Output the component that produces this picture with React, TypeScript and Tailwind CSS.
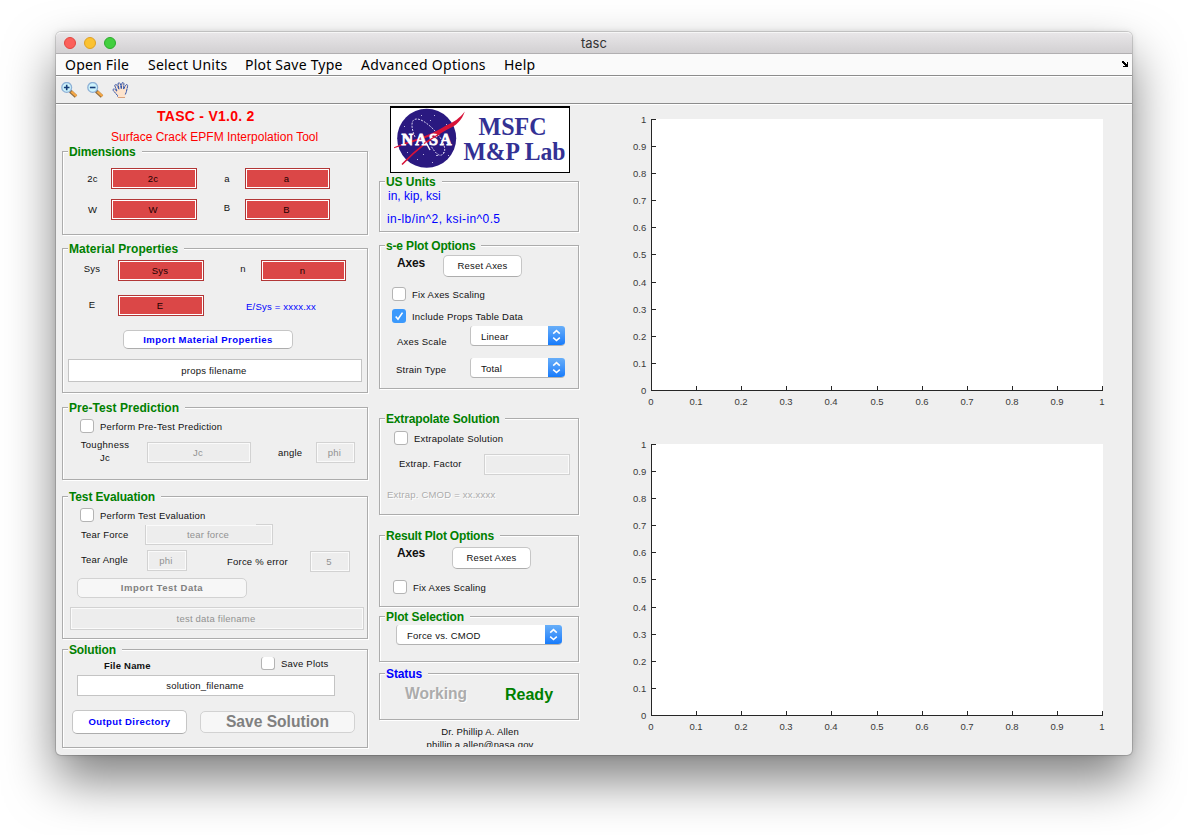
import React from "react";

type Box = { className?: string; children?: React.ReactNode };

function Label({ className = "", children }: Box) {
  return <div className={`shrink-0 whitespace-nowrap pt-px text-[9.5px] leading-[12px] tracking-[0.21px] ${className}`}>{children}</div>;
}

function Panel({ title, className = "", titleClass = "text-[#008000]", children }: Box & { title: string; titleClass?: string }) {
  return (
    <section className={`flex shrink-0 flex-col border border-[#acacac] shadow-[1px_1px_0_#fff,inset_1px_1px_0_#fff] ${className}`}>
      <h2 className={`-mt-[7px] ml-[5px] w-fit whitespace-nowrap bg-[#efefef] pr-1.5 pl-px text-[12px] leading-[14px] font-bold ${titleClass}`}>
        {title}
      </h2>
      {children}
    </section>
  );
}

function Row({ className = "", children }: Box) {
  return <div className={`flex shrink-0 items-start ${className}`}>{children}</div>;
}

function RedField({ className = "", children }: Box) {
  return (
    <div className={`flex h-[21px] shrink-0 justify-center border border-[#b23636] bg-[#db4747] pt-[4px] pr-[2px] text-[9.5px] leading-[12px] tracking-[0.21px] text-[#200] shadow-[inset_0_0_0_1px_#fff] ${className}`}>
      {children}
    </div>
  );
}

function WhiteField({ className = "", children }: Box) {
  return (
    <div className={`flex shrink-0 items-center justify-center border border-[#c4c4c4] bg-white pt-px pr-[2px] text-[9.5px] leading-[12px] tracking-[0.21px] ${className}`}>
      {children}
    </div>
  );
}

function GrayField({ className = "", children }: Box) {
  return (
    <div className={`flex shrink-0 items-center justify-center border border-[#d2d2d2] bg-[#ededed] pt-px pr-[2px] text-[9.5px] leading-[12px] tracking-[0.21px] text-[#929292] shadow-[inset_0_0_0_1px_#fafafa] ${className}`}>
      {children}
    </div>
  );
}

function Button({ className = "", children }: Box) {
  return (
    <div className={`flex shrink-0 items-center justify-center whitespace-nowrap rounded-[5px] border border-[#c6c6c6] border-b-[#adadad] bg-white leading-[12px] ${className}`}>
      {children}
    </div>
  );
}

function DisabledButton({ className = "", children }: Box) {
  return (
    <div className={`flex shrink-0 items-center justify-center whitespace-nowrap rounded-[5px] border border-[#d2d2d2] bg-[#f7f7f7] font-bold text-[#808080] ${className}`}>
      {children}
    </div>
  );
}

function Check({ className = "", checked = false }: { className?: string; checked?: boolean }) {
  return checked ? (
    <svg className={`size-[14px] shrink-0 ${className}`} viewBox="0 0 14 14">
      <rect width="14" height="14" rx="3" fill="#3b99fc" />
      <path d="M3.7 7.4 6 10.2 10.5 3.6" fill="none" stroke="#fff" strokeWidth="1.6" />
    </svg>
  ) : (
    <div className={`size-[14px] shrink-0 rounded-[3px] border border-[#b4b4b4] bg-white ${className}`} />
  );
}

function Select({ className = "", children }: Box) {
  return (
    <div className={`flex h-[20px] shrink-0 overflow-hidden rounded-[4px] rounded-t-[3px] border border-t-0 border-r-0 border-[#c2c2c2] border-b-[#b2b2b2] bg-white ${className}`}>
      <div className="grow pt-[5px] pl-[10px] text-[9.5px] leading-[12px] tracking-[0.21px]">{children}</div>
      <div className="-mb-px flex w-[17px] items-center justify-center bg-linear-to-b from-[#67aef8] to-[#0a78fb]">
        <svg className="h-[14px] w-[11px]" viewBox="0 0 11 14" fill="none" stroke="#fff" strokeWidth="1.5">
          <path d="M2.2 4.6 5.5 1.6 8.8 4.6M2.2 8.6 5.5 11.6 8.8 8.6" />
        </svg>
      </div>
    </div>
  );
}

const steps = [0, 1, 2, 3, 4, 5, 6, 7, 8, 9, 10];
const tickText = (i: number) => (i === 0 ? "0" : i === 10 ? "1" : `0.${i}`);

function Plot() {
  return (
    <svg className="block h-[300px] w-[490px] shrink-0" viewBox="0 0 490 300" fontSize="9.5" fill="#3a3a3a">
      <rect x="25" y="9" width="452" height="272" fill="#fff" />
      <path d="M25.5 9V280.5H477" fill="none" stroke="#262626" shapeRendering="crispEdges" />
      {steps.map((i) => {
        const x = 25.5 + Math.round(i * 45.12);
        const y = 280.5 - Math.round(i * 27.1);
        return (
          <g key={i}>
            <path d={`M${x} 276V281M25 ${y}H29.5`} stroke="#262626" shapeRendering="crispEdges" />
            <text x={x - 0.5} y="295" textAnchor="middle">{tickText(i)}</text>
            <text x="20.3" y={y + 3.5} textAnchor="end">{tickText(i)}</text>
          </g>
        );
      })}
    </svg>
  );
}

function Logo() {
  return (
    <svg className="mt-px ml-[11px] block h-[67px] w-[180px] shrink-0" viewBox="0 0 180 67">
      <rect width="180" height="67" fill="#000" />
      <rect x="1" y="2" width="178" height="64" fill="#fff" />
      <circle cx="36.7" cy="32.3" r="29.5" fill="#2a1980" />
      <g fill="none" stroke="#d5d0ee" strokeWidth="1" strokeDasharray="2 1.2">
        <path d="M25 31C19 17 22 9 33 15C45 22 58 39 54 47C50 52 46 48 41 40" />
      </g>
      <g fill="#bdb6e0">
        <rect x="14" y="20" width="1" height="1" /><rect x="44" y="9" width="1" height="1" />
        <rect x="56" y="18" width="1" height="1" /><rect x="33" y="48" width="1" height="1" />
        <rect x="27" y="53" width="1" height="1" /><rect x="42" y="56" width="1" height="1" />
        <rect x="53" y="46" width="1" height="1" /><rect x="17" y="46" width="1" height="1" />
        <rect x="46" y="49" width="2" height="1" /><rect x="31" y="9" width="1" height="1" />
        <rect x="58" y="49" width="1" height="1" /><rect x="40" y="14" width="1" height="1" />
      </g>
      <path d="M4 41.3C12 37.5 20 35.5 28 32.5C38 29 48 25 56 19.5C64 16 70 12 74.8 5.5C72 14 66 20 58 23C50 27 44 30 38 31C28 35 14 38.5 4 42.3Z" fill="#d81339" />
      <path d="M12 58.5C24 46 38 33 62 19.5" fill="none" stroke="#d81339" strokeWidth="1.5" />
      <g fontFamily="Liberation Serif, serif" fontWeight="bold" fontSize="16" fill="#fff" stroke="#fff" strokeWidth=".8">
        <text x="11.5" y="38.8" textLength="50" lengthAdjust="spacing">NASA</text>
      </g>
      <path d="M34 37.5 50 27.5" stroke="#d81339" strokeWidth="1.3" />
      <path d="M36 36.5 40 44" stroke="#fff" strokeWidth="1.4" />
      <g fontFamily="Liberation Serif, serif" fontWeight="bold" fill="#333194">
        <text x="88.5" y="29.3" textLength="68" lengthAdjust="spacingAndGlyphs" fontSize="25">MSFC</text>
        <text x="73.5" y="54.3" textLength="102" lengthAdjust="spacingAndGlyphs" fontSize="25">M&amp;P Lab</text>
      </g>
    </svg>
  );
}

function Magnifier({ plus = false, className = "" }: { plus?: boolean; className?: string }) {
  return (
    <svg className={`size-[17px] shrink-0 ${className}`} viewBox="0 0 17 17">
      <path d="M9.2 9.2 15 14.5" stroke="#8a6a40" strokeWidth="3.6" />
      <path d="M10.4 9.6 15.4 14.2" stroke="#f2a646" strokeWidth="2.4" />
      <circle cx="5.7" cy="5.4" r="4.9" fill="#cdf3fc" stroke="#8db0d6" strokeWidth="1.3" />
      <path d={plus ? "M2.9 5.5H8.5M5.7 2.7V8.3" : "M2.9 5.5H8.5"} stroke="#153c78" strokeWidth="1.6" />
    </svg>
  );
}

function Hand() {
  return (
    <svg className="ml-[8px] h-[17px] w-[18px] shrink-0" viewBox="0 0 18 17">
      <path d="M5.5 16V13.5L1.3 8.6C.4 7.2 2 6.4 3 7.4L5 9.3 2.9 4C2.4 2.4 4.3 1.9 5 3.3L7 7.2 6 2C5.9.5 7.9.3 8.3 1.8L9.3 6.8 9.8 1.8C10-.1 12 .2 11.9 1.8L11.6 7.2 13.6 3.3C14.4 1.9 16.2 2.7 15.6 4.3L14.3 10 13.3 13V16Z" fill="#fde3cc" />
      <path d="M5.5 14.5V13.5L1.3 8.6C.4 7.2 2 6.4 3 7.4L5 9.3 2.9 4C2.4 2.4 4.3 1.9 5 3.3L7 7.2 6 2C5.9.5 7.9.3 8.3 1.8L9.3 6.8 9.8 1.8C10-.1 12 .2 11.9 1.8L11.6 7.2 13.6 3.3C14.4 1.9 16.2 2.7 15.6 4.3L14.3 10 13.3 12.5" fill="none" stroke="#2f52a8" strokeDasharray="3 .4" />
      <path d="M6 15.5H13" stroke="#d9a27c" />
    </svg>
  );
}

function LeftColumn() {
  return (
    <div className="ml-[6px] flex w-[306px] shrink-0 flex-col">
      <div className="mt-[3px] ml-[95px] text-[14px] leading-[16px] font-bold tracking-[0.27px] whitespace-nowrap text-[#f00]">TASC - V1.0. 2</div>
      <div className="mt-[6px] ml-[49px] h-[21px] text-[12px] leading-[14px] whitespace-nowrap text-[#f00]">Surface Crack EPFM Interpolation Tool</div>

      <Panel title="Dimensions" className="h-[84px]" titleClass="tracking-[-0.15px] text-[#008000]">
        <Row className="mt-[9px] h-[21px]">
          <Label className="mt-1 ml-5 w-[19px] text-center">2c</Label>
          <RedField className="ml-[9px] w-[86px]">2c</RedField>
          <Label className="mt-1 ml-5 w-5 text-center">a</Label>
          <RedField className="ml-2 w-[85px]">a</RedField>
        </Row>
        <Row className="mt-[10px] h-[21px]">
          <Label className="mt-1 ml-5 w-[19px] text-center">W</Label>
          <RedField className="ml-[9px] w-[86px]">W</RedField>
          <Label className="mt-[2px] ml-5 w-5 text-center">B</Label>
          <RedField className="ml-2 w-[85px]">B</RedField>
        </Row>
      </Panel>

      <Panel title="Material Properties" className="mt-[13px] h-[145px]" titleClass="tracking-[0.06px] text-[#008000]">
        <Row className="mt-1 h-[21px]">
          <Label className="mt-[2px] ml-[18px] w-[22px] text-center">Sys</Label>
          <RedField className="ml-[15px] w-[86px]">Sys</RedField>
          <Label className="mt-[2px] ml-[29px] w-5 text-center">n</Label>
          <RedField className="ml-2 w-[85px]">n</RedField>
        </Row>
        <Row className="mt-[14px] h-[21px]">
          <Label className="mt-[3px] ml-[18px] w-[22px] text-center">E</Label>
          <RedField className="ml-[15px] w-[86px]">E</RedField>
          <Label className="mt-[5px] ml-[42px] text-[#00f]">E/Sys = xxxx.xx</Label>
        </Row>
        <Button className="mt-[14px] ml-[60px] h-[19px] w-[170px] text-[9.5px] font-bold tracking-[0.45px] text-[#00f]">Import Material Properties</Button>
        <WhiteField className="mt-[10px] ml-[5px] h-[23px] w-[294px]">props filename</WhiteField>
      </Panel>

      <Panel title="Pre-Test Prediction" className="mt-[14px] h-[73px]" titleClass="tracking-[0.05px] text-[#008000]">
        <Row className="mt-1 h-[14px]">
          <Check className="ml-[17px]" />
          <Label className="mt-px ml-[6px]">Perform Pre-Test Prediction</Label>
        </Row>
        <Row className="mt-[5px]">
          <div className="ml-[15px] w-[54px] shrink-0 text-center text-[9.5px] leading-[13px] tracking-[0.3px]">Toughness Jc</div>
          <GrayField className="mt-1 ml-[15px] h-[21px] w-[104px]">Jc</GrayField>
          <Label className="mt-2 ml-[27px] w-[25px]">angle</Label>
          <GrayField className="mt-1 ml-[13px] h-[21px] w-[39px]">phi</GrayField>
        </Row>
      </Panel>

      <Panel title="Test Evaluation" className="mt-[16px] h-[143px]" titleClass="tracking-[-0.13px] text-[#008000]">
        <Row className="mt-1 h-[14px]">
          <Check className="ml-[17px]" />
          <Label className="mt-px ml-[6px]">Perform Test Evaluation</Label>
        </Row>
        <Row className="mt-[2px] h-[21px]">
          <Label className="mt-1 ml-[18px] w-12">Tear Force</Label>
          <GrayField className="relative ml-4 h-[21px] w-32">
            tear force
            <span className="absolute -top-px -left-px h-px w-[111px] bg-[#efefef]" />
          </GrayField>
        </Row>
        <Row className="mt-[5px] h-[22px]">
          <Label className="mt-[3px] ml-[18px] w-12">Tear Angle</Label>
          <GrayField className="ml-[18px] h-[21px] w-10">phi</GrayField>
          <Label className="mt-[5px] ml-10 w-[62px]">Force % error</Label>
          <GrayField className="mt-px ml-[21px] h-[21px] w-10">5</GrayField>
        </Row>
        <DisabledButton className="mt-[6px] ml-[14px] h-5 w-[170px] text-[9.5px] leading-[12px] tracking-[0.5px]">Import Test Data</DisabledButton>
        <GrayField className="mt-[9px] ml-[7px] h-[23px] w-[294px]">test data filename</GrayField>
      </Panel>

      <Panel title="Solution" className="mt-[10px] h-[99px]" titleClass="tracking-[-0.13px] text-[#008000]">
        <Row className="h-[13px]">
          <Label className="mt-[2px] ml-[41px] w-[50px] font-bold">File Name</Label>
          <div className="ml-[107px] h-[13px] w-[14px] shrink-0 rounded-[3px] border border-t-0 border-[#b4b4b4] bg-white" />
          <Label className="ml-[6px]">Save Plots</Label>
        </Row>
        <WhiteField className="mt-[5px] ml-[14px] h-[21px] w-[258px]">solution_filename</WhiteField>
        <Row className="mt-[14px]">
          <Button className="ml-[9px] h-6 w-[115px] text-[9.5px] font-bold tracking-[0.4px] text-[#00f]">Output Directory</Button>
          <DisabledButton className="mt-px ml-[13px] h-[22px] w-[155px] text-[15.6px] leading-[18px]">Save Solution</DisabledButton>
        </Row>
      </Panel>
    </div>
  );
}

function MiddleColumn() {
  return (
    <div className="ml-[11px] flex w-[200px] shrink-0 flex-col">
      <Logo />
      <Panel title="US Units" className="mt-2 h-[51px]" titleClass="tracking-[-0.05px] text-[#008000]">
        <div className="ml-2 text-[12px] leading-[14px] whitespace-nowrap text-[#00f]">in, kip, ksi</div>
        <div className="mt-[9px] ml-[7px] text-[12px] leading-[14px] tracking-[0.4px] whitespace-nowrap text-[#00f]">in-lb/in^2, ksi-in^0.5</div>
      </Panel>

      <Panel title="s-e Plot Options" className="mt-[13px] h-[144px]" titleClass="tracking-[-0.16px] text-[#008000]">
        <Row className="mt-[2px] h-[22px]">
          <div className="mt-px ml-[17px] w-7 text-[12px] leading-[14px] font-bold tracking-[-0.2px]">Axes</div>
          <Button className="ml-[18px] h-[22px] w-[79px] text-[9.5px] tracking-[0.21px]">Reset Axes</Button>
        </Row>
        <Row className="mt-[10px] h-[14px]">
          <Check className="ml-3" />
          <Label className="mt-px ml-[6px]">Fix Axes Scaling</Label>
        </Row>
        <Row className="mt-2 h-[14px]">
          <Check checked className="ml-3" />
          <Label className="mt-px ml-[6px]">Include Props Table Data</Label>
        </Row>
        <Row className="mt-[3px] h-5">
          <Label className="mt-[9px] ml-[17px] w-12">Axes Scale</Label>
          <Select className="ml-[25px] w-[95px]">Linear</Select>
        </Row>
        <Row className="mt-3 h-5">
          <Label className="mt-[5px] ml-4 w-[50px]">Strain Type</Label>
          <Select className="ml-6 w-[95px]">Total</Select>
        </Row>
      </Panel>

      <Panel title="Extrapolate Solution" className="mt-[29px] h-[97px]" titleClass="tracking-[-0.16px] text-[#008000]">
        <Row className="mt-[5px] h-[14px]">
          <Check className="ml-[14px]" />
          <Label className="mt-px ml-[6px]">Extrapolate Solution</Label>
        </Row>
        <Row className="mt-[9px] h-[21px]">
          <Label className="mt-[3px] ml-[19px] w-16">Extrap. Factor</Label>
          <GrayField className="ml-[21px] h-[21px] w-[86px]" />
        </Row>
        <Label className="mt-[13px] ml-[7px] text-[#acacac] [text-shadow:1px_1px_0_#fff]">Extrap. CMOD = xx.xxxx</Label>
      </Panel>

      <Panel title="Result Plot Options" className="mt-5 h-[72px]" titleClass="tracking-[-0.18px] text-[#008000]">
        <Row className="mt-[3px] h-[23px]">
          <div className="ml-[17px] w-7 text-[12px] leading-[14px] font-bold tracking-[-0.2px]">Axes</div>
          <Button className="mt-px ml-[27px] h-[22px] w-[79px] text-[9.5px] tracking-[0.21px]">Reset Axes</Button>
        </Row>
        <Row className="mt-[11px] h-[14px]">
          <Check className="ml-[13px]" />
          <Label className="mt-px ml-[6px]">Fix Axes Scaling</Label>
        </Row>
      </Panel>

      <Panel title="Plot Selection" className="mt-[9px] h-[46px]" titleClass="tracking-[-0.1px] text-[#008000]">
        <Select className="mt-px ml-4 w-[166px]">Force vs. CMOD</Select>
      </Panel>

      <Panel title="Status" titleClass="tracking-[-0.1px] text-[#00f]" className="mt-[11px] h-[47px]">
        <Row className="mt-1 text-[16px] leading-[18px] font-bold">
          <div className="ml-[25px] w-[100px] text-[15.6px] text-[#acacac] [text-shadow:1px_1px_0_#fff]">Working</div>
          <div className="mt-px text-[#008000]">Ready</div>
        </Row>
      </Panel>
      <div className="mt-[5px] h-[22px] overflow-hidden pl-[2px] text-center text-[9.5px] leading-[13px] tracking-[0.16px]">
        Dr. Phillip A. Allen
        <br />
        phillip.a.allen@nasa.gov
      </div>
    </div>
  );
}

export default function App() {
  return (
    <div className="h-[835px] w-[1188px] overflow-hidden bg-white pt-8 pl-14 font-['Liberation_Sans',Arial,sans-serif] text-[#111]">
      <div className="flex h-[723px] w-[1076px] flex-col rounded-[5px] bg-[#efefef] shadow-[0_0_0_1px_rgba(0,0,0,0.14),0_0_6px_rgba(0,0,0,0.12),0_25px_50px_rgba(0,0,0,0.5)]">
        <div className="flex h-[22px] shrink-0 items-center rounded-t-[5px] border-t border-b border-t-[#f6f6f6] border-b-[#b1afb1] bg-linear-to-b from-[#e8e6e8] to-[#d2d0d2]">
          <div className="ml-2 flex w-[517px] shrink-0 gap-2">
            <span className="size-3 rounded-full border border-[#e2463f] bg-[#fb605b]" />
            <span className="size-3 rounded-full border border-[#dfa023] bg-[#fbc231]" />
            <span className="size-3 rounded-full border border-[#2cab2c] bg-[#42cf3f]" />
          </div>
          <span className="font-['Inter',sans-serif] text-[13px] leading-4 text-[#333]">tasc</span>
        </div>
        <div className="flex h-[22px] shrink-0 items-center border-b border-[#8c8c8c] bg-[#fafafa] font-['Noto_Sans',sans-serif] text-[14px] leading-5 tracking-[0.22px] whitespace-nowrap text-black">
          <span className="ml-[9px] w-[83px]">Open File</span>
          <span className="w-[97px]">Select Units</span>
          <span className="w-[116px]">Plot Save Type</span>
          <span className="w-[143px] tracking-[0.3px]">Advanced Options</span>
          <span>Help</span>
          <svg className="mr-1 ml-auto size-[7px]" viewBox="0 0 7 7" shapeRendering="crispEdges">
            <path d="M0 1H1V0H3V1H4V2H5V3H6V1H7V6H2V5H4V4H3V3H2V2H1V1Z" fill="#000" />
          </svg>
        </div>
        <div className="flex h-[28px] shrink-0 items-start border-t border-b border-t-white border-b-[#8c8c8c] bg-[#eee] pt-[5px]">
          <Magnifier plus className="ml-[5px]" />
          <Magnifier className="ml-[9px]" />
          <Hand />
        </div>
        <div className="flex grow border-t border-white">
          <LeftColumn />
          <MiddleColumn />
          <div className="ml-[47px] flex flex-col gap-[25px] pt-[5px]">
            <Plot />
            <Plot />
          </div>
        </div>
      </div>
    </div>
  );
}
